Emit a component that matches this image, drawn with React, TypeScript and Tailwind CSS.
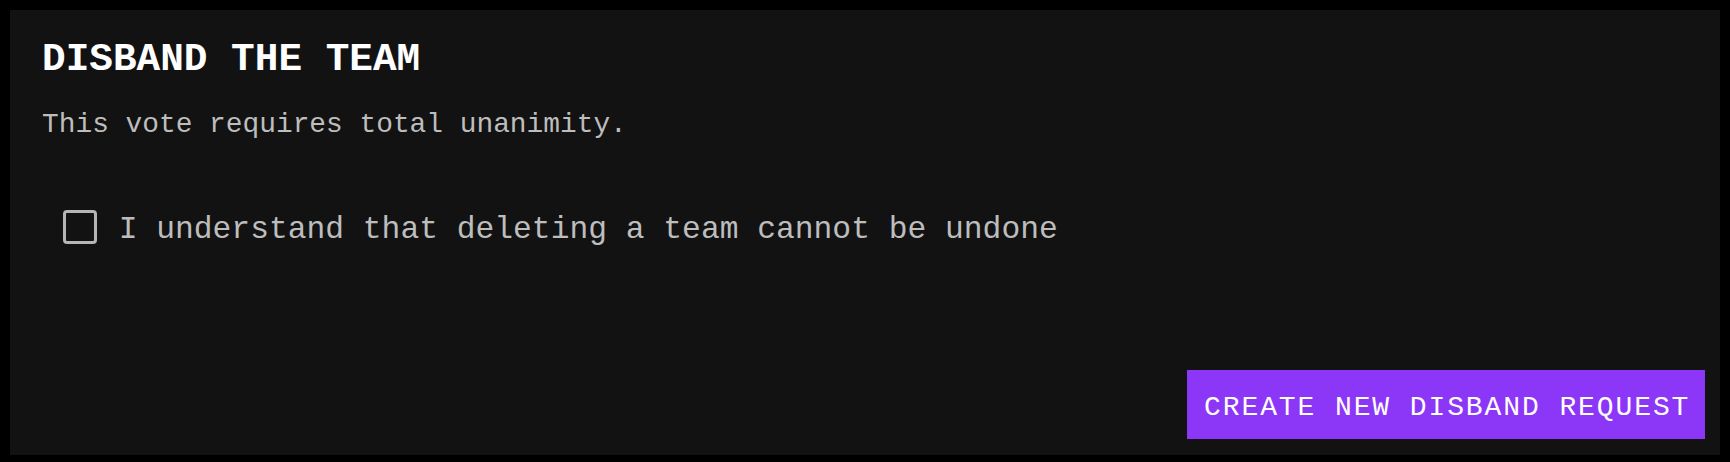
export default function App() {
  return (
    <div className="w-[1730px] h-[462px] bg-black pt-[10px] px-[10px] overflow-hidden" style={{ fontFamily: '"Liberation Mono", "DejaVu Sans Mono", monospace' }}>
      <div className="h-[445px] bg-[#121212] flex flex-col pl-[32px] pr-[15px] pt-[26px] pb-[16px]">
        <h1 className="text-[39.4px] leading-[48px] font-bold text-white">DISBAND THE TEAM</h1>
        <p className="mt-[22.6px] text-[27.85px] leading-[36px] text-[#bdbdbd]">This vote requires total unanimity.</p>
        <label className="mt-[67px] ml-[20.7px] flex items-start gap-[22px]">
          <span className="w-[34px] h-[34px] border-[3px] border-[#b5b5b5] rounded-[4px] shrink-0" />
          <span className="text-[31.3px] leading-[40px] text-[#bdbdbd]">I understand that deleting a team cannot be undone</span>
        </label>
        <button className="mt-auto self-end h-[69px] pl-[17px] pr-[14.7px] pt-[6px] flex items-center bg-[#8c36f7] text-white text-[28px] leading-[36px] tracking-[1.9px]">
          CREATE NEW DISBAND REQUEST
        </button>
      </div>
    </div>
  );
}
